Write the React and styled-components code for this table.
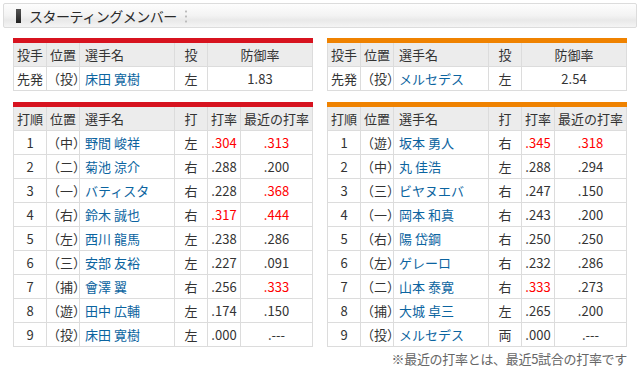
import React from "react"
import styled, { createGlobalStyle } from "styled-components"

const GlobalStyle = createGlobalStyle`
  body {
    margin: 0;
    background: #fff;
    font-family: "Noto Sans CJK JP", "Noto Sans", sans-serif;
    color: #333;
  }
`

const Page = styled.div`
  width: 640px;
  height: 372px;
  padding: 3px 0 0 3px;
  box-sizing: border-box;
`

const TitleBar = styled.div`
  width: 634px;
  height: 25px;
  box-sizing: border-box;
  border: 1px solid #dcdcdc;
  border-radius: 2px;
  background: linear-gradient(#fdfdfd, #f3f3f3 50%, #e9e9e9 70%, #f4f4f4);
  display: flex;
  align-items: center;
  padding-left: 12px;
`

const TitleMark = styled.span`
  width: 5px;
  height: 14px;
  background: linear-gradient(#555, #222);
  margin-right: 8px;
`

const Title = styled.h2`
  margin: 0;
  font-size: 14px;
  font-weight: normal;
  color: #2a2a2a;
  letter-spacing: -0.5px;
  line-height: 1;
`

const Dots = styled.span`
  width: 2px;
  height: 14px;
  margin-left: 8px;
  background: radial-gradient(circle, #bbb 1px, transparent 1.2px) 0 0 / 2px 5px repeat-y;
`

const Columns = styled.div`
  display: flex;
  gap: 14px;
  padding: 10px 0 0 10px;
`

const Column = styled.div`
  width: 300px;
  display: flex;
  flex-direction: column;
  gap: 11px;
`

const Table = styled.table`
  width: 300px;
  border-collapse: collapse;
  table-layout: fixed;
  font-size: 13px;
  border-top: 5px solid ${p => p.$bar};
  td, th {
    border: 1px solid #dcdcdc;
    height: 23px;
    padding: 0;
    text-align: center;
    font-weight: normal;
    line-height: 1;
  }
  th {
    background: #ececec;
    color: #333;
    border-top: 0;
  }
`

const Name = styled.td`
  && {
    text-align: left;
    padding-left: 5px;
    color: #0b64a0;
  }
`

const NameHead = styled.th`
  && {
    text-align: left;
    padding-left: 5px;
  }
`

const Num = styled.td`
  color: ${p => (p.$hot ? "#f00" : "#333")};
`

const Note = styled.div`
  width: 300px;
  text-align: right;
  font-size: 13px;
  color: #666;
  margin-top: -9px;
  letter-spacing: -0.3px;
`

const leftPitcher = { name: "床田 寛樹", hand: "左", era: "1.83" }
const rightPitcher = { name: "メルセデス", hand: "左", era: "2.54" }

const leftLineup = [
  ["1", "（中）", "野間 峻祥", "左", ".304", ".313", true, true],
  ["2", "（二）", "菊池 涼介", "右", ".288", ".200", false, false],
  ["3", "（一）", "バティスタ", "右", ".228", ".368", false, true],
  ["4", "（右）", "鈴木 誠也", "右", ".317", ".444", true, true],
  ["5", "（左）", "西川 龍馬", "左", ".238", ".286", false, false],
  ["6", "（三）", "安部 友裕", "左", ".227", ".091", false, false],
  ["7", "（捕）", "會澤 翼", "右", ".256", ".333", false, true],
  ["8", "（遊）", "田中 広輔", "左", ".174", ".150", false, false],
  ["9", "（投）", "床田 寛樹", "左", ".000", ".---", false, false],
]

const rightLineup = [
  ["1", "（遊）", "坂本 勇人", "右", ".345", ".318", true, true],
  ["2", "（中）", "丸 佳浩", "左", ".288", ".294", false, false],
  ["3", "（三）", "ビヤヌエバ", "右", ".247", ".150", false, false],
  ["4", "（一）", "岡本 和真", "右", ".243", ".200", false, false],
  ["5", "（右）", "陽 岱鋼", "右", ".250", ".250", false, false],
  ["6", "（左）", "ゲレーロ", "右", ".232", ".286", false, false],
  ["7", "（二）", "山本 泰寛", "右", ".333", ".273", true, false],
  ["8", "（捕）", "大城 卓三", "左", ".265", ".200", false, false],
  ["9", "（投）", "メルセデス", "両", ".000", ".---", false, false],
]

const PitcherTable = ({ bar, p }) => (
  <Table $bar={bar}>
    <colgroup>
      <col style={{ width: 33 }} />
      <col style={{ width: 33 }} />
      <col style={{ width: 95 }} />
      <col style={{ width: 33 }} />
      <col />
    </colgroup>
    <thead>
      <tr>
        <th>投手</th>
        <th>位置</th>
        <NameHead>選手名</NameHead>
        <th>投</th>
        <th>防御率</th>
      </tr>
    </thead>
    <tbody>
      <tr>
        <td>先発</td>
        <td>（投）</td>
        <Name>{p.name}</Name>
        <td>{p.hand}</td>
        <Num>{p.era}</Num>
      </tr>
    </tbody>
  </Table>
)

const LineupTable = ({ bar, rows }) => (
  <Table $bar={bar}>
    <colgroup>
      <col style={{ width: 33 }} />
      <col style={{ width: 33 }} />
      <col style={{ width: 95 }} />
      <col style={{ width: 33 }} />
      <col style={{ width: 33 }} />
      <col />
    </colgroup>
    <thead>
      <tr>
        <th>打順</th>
        <th>位置</th>
        <NameHead>選手名</NameHead>
        <th>打</th>
        <th>打率</th>
        <th>最近の打率</th>
      </tr>
    </thead>
    <tbody>
      {rows.map(r => (
        <tr key={r[0]}>
          <td>{r[0]}</td>
          <td>{r[1]}</td>
          <Name>{r[2]}</Name>
          <td>{r[3]}</td>
          <Num $hot={r[6]}>{r[4]}</Num>
          <Num $hot={r[7]}>{r[5]}</Num>
        </tr>
      ))}
    </tbody>
  </Table>
)

export default function App() {
  return (
    <Page>
      <GlobalStyle />
      <TitleBar>
        <TitleMark />
        <Title>スターティングメンバー</Title>
        <Dots />
      </TitleBar>
      <Columns>
        <Column>
          <PitcherTable bar="#d7131f" p={leftPitcher} />
          <LineupTable bar="#d7131f" rows={leftLineup} />
        </Column>
        <Column>
          <PitcherTable bar="#ef8200" p={rightPitcher} />
          <LineupTable bar="#ef8200" rows={rightLineup} />
          <Note>※最近の打率とは、最近5試合の打率です</Note>
        </Column>
      </Columns>
    </Page>
  )
}
